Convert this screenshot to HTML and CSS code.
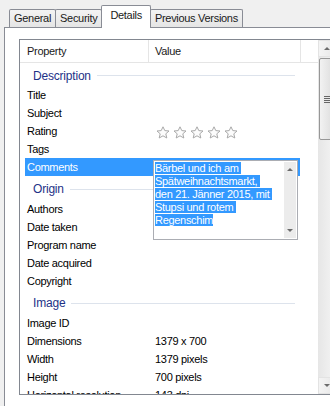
FILE: index.html
```html
<!DOCTYPE html>
<html lang="de">

<head>
    <meta charset="UTF-8">
    <meta name="viewport" content="width=device-width, initial-scale=1.0">
    <title>Eigenschaften</title>
    <link rel="stylesheet" href="styles.css">
</head>

<body>
    <div class="tabs">
        <div class="tab">General</div>
        <div class="tab">Security</div>
        <div class="tab active">Details</div>
        <div class="tab">Previous Versions</div>
    </div>

    <div class="panel">
        <div class="list">
            <div class="list-body">
                <div class="header">
                    <div class="head-name">Property</div>
                    <div class="head-value">Value</div>
                </div>

                <div class="group first"><span>Description</span><i class="rule"></i></div>
                <div class="row"><div class="name">Title</div><div class="value"></div></div>
                <div class="row"><div class="name">Subject</div><div class="value"></div></div>
                <div class="row">
                    <div class="name">Rating</div>
                    <div class="value stars">
                        <svg viewBox="0 0 14 13"><polygon points="7,0.8 8.8,4.6 13,5 9.8,7.8 10.8,12 7,9.8 3.2,12 4.2,7.8 1,5 5.2,4.6"/></svg>
                        <svg viewBox="0 0 14 13"><polygon points="7,0.8 8.8,4.6 13,5 9.8,7.8 10.8,12 7,9.8 3.2,12 4.2,7.8 1,5 5.2,4.6"/></svg>
                        <svg viewBox="0 0 14 13"><polygon points="7,0.8 8.8,4.6 13,5 9.8,7.8 10.8,12 7,9.8 3.2,12 4.2,7.8 1,5 5.2,4.6"/></svg>
                        <svg viewBox="0 0 14 13"><polygon points="7,0.8 8.8,4.6 13,5 9.8,7.8 10.8,12 7,9.8 3.2,12 4.2,7.8 1,5 5.2,4.6"/></svg>
                        <svg viewBox="0 0 14 13"><polygon points="7,0.8 8.8,4.6 13,5 9.8,7.8 10.8,12 7,9.8 3.2,12 4.2,7.8 1,5 5.2,4.6"/></svg>
                    </div>
                </div>
                <div class="row"><div class="name">Tags</div><div class="value"></div></div>
                <div class="row selected">
                    <div class="name">Comments</div>
                    <!-- editor liegt über der Zeile -->
                    <div class="editor">
                        <div class="editor-text">
                            <div><span>Bärbel und ich am </span></div>
                            <div><span>Spätweihnachtsmarkt, </span></div>
                            <div><span>den 21. Jänner 2015, mit </span></div>
                            <div><span>Stupsi und rotem </span></div>
                            <div><span>Regenschim</span></div>
                        </div>
                        <div class="editor-scroll">
                            <div class="arrow up"></div>
                            <div class="arrow down"></div>
                        </div>
                    </div>
                </div>

                <div class="group"><span>Origin</span><i class="rule"></i></div>
                <div class="row"><div class="name">Authors</div><div class="value"></div></div>
                <div class="row"><div class="name">Date taken</div><div class="value"></div></div>
                <div class="row"><div class="name">Program name</div><div class="value"></div></div>
                <div class="row"><div class="name">Date acquired</div><div class="value"></div></div>
                <div class="row"><div class="name">Copyright</div><div class="value"></div></div>

                <div class="group"><span>Image</span><i class="rule"></i></div>
                <div class="row"><div class="name">Image ID</div><div class="value"></div></div>
                <div class="row"><div class="name">Dimensions</div><div class="value">1379 x 700</div></div>
                <div class="row"><div class="name">Width</div><div class="value">1379 pixels</div></div>
                <div class="row"><div class="name">Height</div><div class="value">700 pixels</div></div>
                <div class="row"><div class="name">Horizontal resolution</div><div class="value">143 dpi</div></div>
            </div>

            <div class="scrollbar">
                <div class="sb-btn"><div class="arrow up"></div></div>
                <div class="sb-thumb"><div class="grip"></div></div>
                <div class="sb-track"></div>
                <div class="sb-btn"><div class="arrow down"></div></div>
            </div>
        </div>
    </div>
</body>

</html>
```

FILE: styles.css
```css
body {
    margin: 0;
    width: 330px;
    height: 406px;
    overflow: hidden;
    background-color: #f0f0f0;
    font-family: "Liberation Sans", Arial, sans-serif;
    font-size: 11px;
    letter-spacing: -0.3px;
    color: #000;
}

/* tab strip */
.tabs {
    display: flex;
    align-items: flex-end;
    height: 27px;
    padding-left: 9px;
}

.tab {
    position: relative;
    height: 17px;
    line-height: 17px;
    padding: 0 4px;
    margin-right: -1px;
    border: 1px solid #898c95;
    border-bottom: none;
    border-radius: 2px 2px 0 0;
    background: linear-gradient(#f3f3f3, #e5e5e5);
    color: #1a1a1a;
}

.tab.active {
    z-index: 1;
    height: 22px;
    line-height: 18px;
    margin-bottom: -1px;
    padding: 0 8px;
    background: #fff;
}

.panel {
    height: 378px;
    margin-left: 4px;
    padding: 11px 0 0 14px;
    border-left: 1px solid #898c95;
    border-top: 1px solid #898c95;
    background-color: #fff;
}

/* list view */
.list {
    display: flex;
    width: 320px;
    height: 354px;
    border: 1px solid #828790;
    overflow: hidden;
}

.list-body {
    width: 298px;
    flex-shrink: 0;
}

.header {
    display: flex;
    height: 22px;
    line-height: 22px;
    border-bottom: 1px solid #e5e5e5;
    color: #1a1a1a;
}

.head-name {
    width: 121px;
    padding-left: 7px;
    border-right: 1px solid #e5e5e5;
}

.head-value {
    width: 145px;
    padding-left: 6px;
    border-right: 1px solid #e5e5e5;
}

.group {
    display: flex;
    align-items: center;
    height: 24px;
    width: 275px;
    padding: 2px 0 0 13px;
    box-sizing: border-box;
    font-size: 12px;
    letter-spacing: -0.2px;
    color: #1e3287;
}

.group.first {
    height: 23px;
}

.group .rule {
    flex: 1;
    height: 1px;
    margin-left: 6px;
    background-color: #dde3ec;
}

.row {
    display: flex;
    width: 275px;
    height: 18px;
    line-height: 18px;
    margin-left: 5px;
    white-space: nowrap;
}

.row .name {
    width: 128px;
    padding-left: 2px;
}

.row.selected {
    position: relative;
    background-color: #3399ff;
    color: #fff;
}

.stars {
    display: flex;
    gap: 3px;
    padding-top: 4px;
    margin-left: 1px;
}

.stars svg {
    width: 14px;
    height: 13px;
}

.stars polygon {
    fill: #fcfcfc;
    stroke: #a9a9a9;
    stroke-width: 1;
    stroke-linejoin: round;
}

/* comment editor */
.editor {
    position: absolute;
    left: 128px;
    top: 2px;
    z-index: 2;
    display: flex;
    width: 145px;
    height: 80px;
    box-sizing: border-box;
    border: 1px solid #abadb3;
    background-color: #fff;
    line-height: 13px;
}

.editor-text {
    flex: 1;
    padding: 1px 0 0 1px;
}

.editor-text span {
    background-color: #3399ff;
    color: #fff;
    white-space: pre;
}

.editor-scroll {
    display: flex;
    flex-direction: column;
    justify-content: space-between;
    width: 12px;
    margin: 1px 1px 1px 0;
    background-color: #ececec;
}

.arrow {
    width: 0;
    height: 0;
    margin: 6px auto;
    border-left: 3px solid transparent;
    border-right: 3px solid transparent;
}

.arrow.up {
    border-bottom: 3px solid #6b6b6b;
}

.arrow.down {
    border-top: 3px solid #6b6b6b;
}

/* main scrollbar */
.scrollbar {
    display: flex;
    flex-direction: column;
    width: 17px;
    background: linear-gradient(90deg, #e6e6e6, #f4f4f4);
}

.sb-btn {
    height: 17px;
    box-sizing: border-box;
    border: 1px solid #e3e3e3;
    background: linear-gradient(90deg, #f4f4f4, #e8e8e8);
}

.sb-btn .arrow {
    margin: 6px 0 0 5px;
}

.sb-thumb {
    display: flex;
    align-items: center;
    height: 82px;
    margin: 1px 0 0 1px;
    box-sizing: border-box;
    border: 1px solid #979797;
    border-radius: 2px;
    background: linear-gradient(90deg, #f2f2f2, #dcdcdc);
}

.grip {
    width: 7px;
    height: 7px;
    margin-left: 4px;
    background: repeating-linear-gradient(#666 0 1px, #e8e8e8 1px 2px);
}

.sb-track {
    flex: 1;
}
```
